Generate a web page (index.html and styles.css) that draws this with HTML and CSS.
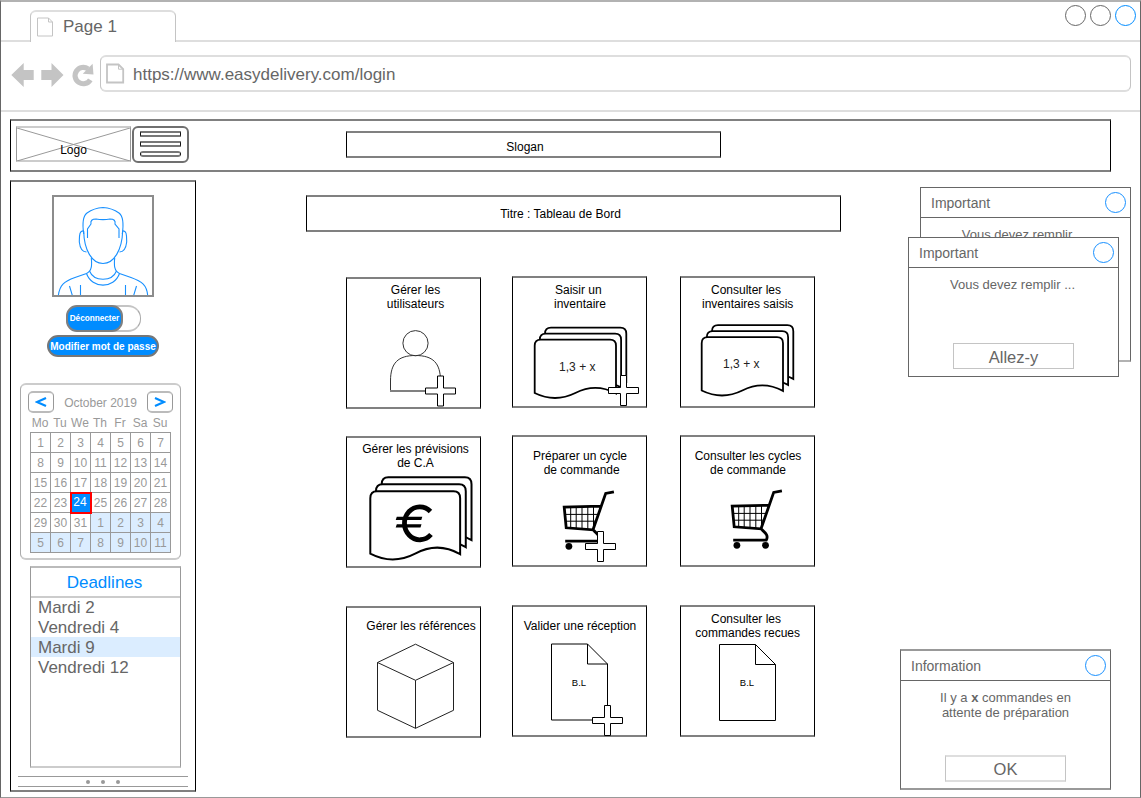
FILE: index.html
```html
<!DOCTYPE html>
<html lang="fr">
<head>
<meta charset="utf-8">
<title>Tableau de Bord</title>
<link rel="stylesheet" href="styles.css">
</head>
<body>
<svg class="defs" width="0" height="0">
  <defs>
    <path id="plus" d="M12.5 0H18.5V12H30.5V18H18.5V30H12.5V18H.5V12H12.5Z" fill="#fff" stroke="#000"/>
    <path id="sheet" d="M0 53.3V6Q0 0 6 0H75.3Q81.3 0 81.3 6V53.7Q61 42.7 40.6 53.3Q20.3 63.3 0 53.3Z" fill="#fff" stroke="#000" stroke-width="1.8"/>
    <g id="sheets">
      <use href="#sheet" x="10.3" y="-12"/>
      <use href="#sheet" x="5.1" y="-6"/>
      <use href="#sheet"/>
    </g>
    <g id="cart" fill="none" stroke="#000">
      <path stroke-width="2.8" d="M50.7 .8L42.5 2.4L29.8 38.8L3 36.8L1 16L38 15.2M29.8 38.8C33 42 38 45 35 50.2H2"/>
      <path stroke-width="1" d="M7.5 16V37M13 16V37M18.8 16V38M24.6 16V38M30.3 16V37M2 23.4H35M2.5 30.2H33"/>
      <g fill="#000" stroke="none"><circle cx="5.7" cy="55.3" r="3.4"/><circle cx="34.3" cy="55.3" r="3.4"/></g>
    </g>
  </defs>
</svg>
<div class="browser">
  <div class="tabs">
    <div class="tab">
      <svg class="tab-icon" width="17" height="20" fill="none" stroke="#c4c4c4"><path d="M.5 1H11.5L15.5 5V19H.5ZM11.5 1V5H15.5"/></svg>
      <span>Page 1</span>
    </div>
    <div class="window-buttons"><i></i><i></i><i class="blue"></i></div>
  </div>
  <div class="toolbar">
    <svg class="nav" width="99" height="68" viewBox="1 42 99 68" fill="#c4c4c4">
      <path d="M11.3 75L23.7 63V70H33.7V80H23.7V87Z"/>
      <path d="M63.5 75L51.5 63V70H41.3V80H51.5V87Z"/>
      <path d="M90.3 79.8A8.2 8.2 0 1 1 88 68.800" fill="none" stroke="#c4c4c4" stroke-width="5.2"/>
      <path d="M92.6 63.700L93.5 74.6L82.8 73.8Z"/>
    </svg>
    <div class="url">
      <svg class="url-icon" width="19" height="21" fill="none" stroke="#c4c4c4"><path stroke-width="1.8" d="M1 1.5H12.5L17.2 6.2V19.5H1Z"/><path d="M12.5 1.5V6.2H17.2"/></svg>
      <span>https://www.easydelivery.com/login</span>
    </div>
  </div>

  <div class="header box">
    <div class="logo">
      <svg width="113" height="33" stroke="#999"><path d="M0 0L113 33M113 0L0 33"/></svg>
      <span>Logo</span>
    </div>
    <div class="burger"><i></i><i></i><i></i></div>
    <div class="slogan box">Slogan</div>
  </div>

  <div class="main">
    <div class="sidebar box">
      <div class="avatar">
        <svg width="98" height="98" viewBox="54 197 98 98" fill="none" stroke="#1890ff" stroke-width="1.1">
          <path d="M83.7 234C82 222 83 216 87 213Q94 208 103 207.500Q112 208 119 213C123 216 124 222 122.300 234"/>
          <path d="M87.500 238V229L91 224Q90 219 96 219Q103 220.300 110 219Q116 219 115 224L119 229V238"/>
          <path d="M83.700 231C84 250 92 263.500 103 263.500C114 263.500 122 250 122.700 231"/>
          <path d="M84 231C79 230 79.500 236 79.300 242C80 248 82 252 86.500 252M122.300 231C127 230 126.500 236 126.700 242C126 248 124 252 119.500 252"/>
          <path d="M91.300 258C92 265 92 271 86.500 273.500L75 277.500C64 281.500 59.500 285 58.300 296M114.700 258C114 265 114 271 119.500 273.500L131 277.500C142 281.500 147 285 147.700 296"/>
          <path d="M89.500 271C94 282 112 282 116.500 271M86.500 273.500C92 289 114 289 119.500 273.500M80.500 285V296M125.500 285V296M69.500 286L72.500 296M136.500 286L133.500 296"/>
        </svg>
      </div>
      <div class="toggle"><span>Déconnecter</span></div>
      <div class="pill">Modifier mot de passe</div>

      <div class="calendar">
        <div class="cal-head">
          <b><svg width="12" height="10"><path d="M11 1L2 5L11 9" fill="none" stroke="#008cff" stroke-width="2.2"/></svg></b>
          <span>October 2019</span>
          <b><svg width="12" height="10"><path d="M1 1L10 5L1 9" fill="none" stroke="#008cff" stroke-width="2.2"/></svg></b>
        </div>
        <div class="days"><i>Mo</i><i>Tu</i><i>We</i><i>Th</i><i>Fr</i><i>Sa</i><i>Su</i></div>
        <div class="dates">
          <i>1</i><i>2</i><i>3</i><i>4</i><i>5</i><i>6</i><i>7</i>
          <i>8</i><i>9</i><i>10</i><i>11</i><i>12</i><i>13</i><i>14</i>
          <i>15</i><i>16</i><i>17</i><i>18</i><i>19</i><i>20</i><i>21</i>
          <i>22</i><i>23</i><i class="today">24</i><i>25</i><i>26</i><i>27</i><i>28</i>
          <i>29</i><i>30</i><i>31</i><i class="next">1</i><i class="next">2</i><i class="next">3</i><i class="next">4</i>
          <i class="next">5</i><i class="next">6</i><i class="next">7</i><i class="next">8</i><i class="next">9</i><i class="next">10</i><i class="next">11</i>
        </div>
      </div>

      <div class="deadlines">
        <div class="dl-title">Deadlines</div>
        <div class="dl">Mardi 2</div>
        <div class="dl">Vendredi 4</div>
        <div class="dl selected">Mardi 9</div>
        <div class="dl">Vendredi 12</div>
      </div>
      <div class="grip"><i></i><i></i><i></i></div>
    </div>

    <div class="center">
      <div class="title box">Titre : Tableau de Bord</div>
      <div class="columns">
        <div class="column first">
          <div class="card box">
            <p class="label r2">Gérer les<br>utilisateurs</p>
            <svg class="art" width="135" height="132">
              <g fill="none" stroke="#333"><circle cx="69.500" cy="66.200" r="12.600"/><path d="M44.500 114V104C44.500 86 52 78.500 69.500 78.500S94.500 86 94.500 104V114"/><path d="M44 114H95" stroke="#808080" stroke-width="2"/></g>
              <use href="#plus" x="79" y="99"/>
            </svg>
          </div>
          <div class="card box">
            <p class="label r2">Gérer les prévisions<br>de C.A</p>
            <svg class="art" width="135" height="132">
              <use href="#sheets" transform="translate(24.300 55.300) scale(1.105 1.170)"/>
              <path d="M84.500 75.500A15.300 16.500 0 1 0 85 98.500" fill="none" stroke="#000" stroke-width="4.800"/>
              <path d="M50.800 80.800H76.300L75.300 84H49.700ZM50.800 88.300H75.500L74.500 91.500H49.700Z"/>
            </svg>
          </div>
          <div class="card box">
            <p class="label mid r7">Gérer les références</p>
            <svg class="art" width="135" height="132" fill="none" stroke="#222"><path d="M69.500 38.200L107.500 56.500V104.300L69.500 122.300L31.500 104.300V56.500ZM31.500 56.500L69.500 74.300L107.500 56.500M69.500 74.300V122.300"/></svg>
          </div>
        </div>
        <div class="column second">
          <div class="card box">
            <p class="label top">Saisir un&nbsp;<br>inventaire</p>
            <svg class="art" width="135" height="132">
              <use href="#sheets" x="22.700" y="63.700"/>
              <text x="65.300" y="95" class="t12">1,3 + x</text>
              <use href="#plus" x="96" y="99.500"/>
            </svg>
          </div>
          <div class="card box">
            <p class="label low">Préparer un cycle<br>&nbsp;de commande</p>
            <svg class="art" width="135" height="132"><use href="#cart" x="51.200" y="56"/><use href="#plus" x="73" y="96.500"/></svg>
          </div>
          <div class="card box">
            <p class="label low">Valider une réception</p>
            <svg class="art" width="135" height="132">
              <path d="M39.500 39H75.500L95.500 59V115H39.500ZM75.500 39V59H95.500" fill="none" stroke="#000"/>
              <text x="67" y="81" class="t10">B.L</text>
              <use href="#plus" x="80" y="100.500"/>
            </svg>
          </div>
        </div>
        <div class="column third">
          <div class="card box">
            <p class="label top l1">Consulter les<br>&nbsp;inventaires saisis</p>
            <svg class="art" width="135" height="132">
              <use href="#sheets" x="21.700" y="61.200"/>
              <text x="61.300" y="92" class="t12">1,3 + x</text>
            </svg>
          </div>
          <div class="card box">
            <p class="label low">Consulter les cycles<br>de commande</p>
            <svg class="art" width="135" height="132"><use href="#cart" x="51.200" y="55"/></svg>
          </div>
          <div class="card box">
            <p class="label top l1">Consulter les<br>&nbsp;commandes recues</p>
            <svg class="art" width="135" height="132">
              <path d="M39.500 39.500H75.500L95.500 59.500V115.500H39.500ZM75.500 39.500V59.500H95.500" fill="none" stroke="#000"/>
              <text x="67" y="81" class="t10">B.L</text>
            </svg>
          </div>
        </div>
      </div>
    </div>

    <div class="notices">
      <div class="notice back">
        <div class="n-head"><span>Important</span><i></i></div>
        <p>Vous devez remplir</p>
      </div>
      <div class="notice front">
        <div class="n-head"><span>Important</span><i></i></div>
        <p>Vous devez remplir ...</p>
        <button>Allez-y</button>
      </div>
      <div class="notice info">
        <div class="n-head"><span>Information</span><i></i></div>
        <p>Il y a <b>x</b> commandes en<br>attente de préparation</p>
        <button>OK</button>
      </div>
    </div>
  </div>
</div>
</body>
</html>
```
FILE: styles.css
```css
* { box-sizing: border-box; }
body { margin: 0; background: #fff; font-family: "Liberation Sans", Arial, sans-serif; font-size: 12px; color: #000; }
i { font-style: normal; }
p { margin: 0; }
svg { display: block; flex: none; }
.defs { position: absolute; }
.box { border: 1px solid #000; border-top: 2px solid #808080; border-bottom: 2px solid #808080; }

.browser { width: 1141px; height: 798px; overflow: hidden; border: 1px solid #666; border-top: 2px solid #b2b2b2; border-bottom-color: #999; }
.tabs { height: 40px; border-bottom: 2px solid #dedede; display: flex; padding: 8px 4px 0 29px; justify-content: space-between; align-items: flex-start; }
.tab { width: 146px; height: 32px; background: #fff; border: 1px solid #c4c4c4; border-top: 2px solid #dedede; border-bottom: 0; border-radius: 6px 6px 0 0; display: flex; padding-left: 6px; font-size: 17px; color: #666; line-height: 30px; }
.tab-icon { margin: 5px 9px 0 0; }
.window-buttons { display: flex; gap: 4px; margin-top: -5px; }
.window-buttons i { width: 21px; height: 21px; border: 1px solid #666; border-radius: 50%; }
.window-buttons .blue { border-color: #008cff; }

.toolbar { height: 70px; border-bottom: 2px solid #dedede; display: flex; }
.url { width: 1031px; height: 37px; margin-top: 13px; border: 1px solid #c4c4c4; border-top: 2px solid #dedede; border-bottom: 2px solid #dedede; border-radius: 6px; display: flex; padding-left: 5px; font-size: 17px; line-height: 36px; color: #666; }
.url-icon { margin: 6px 8px 0 0; }

.header { margin: 7px 0 0 9px; width: 1101px; height: 53px; display: flex; padding: 5px 0 0 5px; }
.logo { width: 115px; height: 36px; display: grid; border: 1px solid #999; border-top: 2px solid #ccc; border-bottom: 2px solid #ccc; }
.logo svg, .logo span { grid-area: 1 / 1; }
.logo span { justify-self: center; margin-top: 15px; line-height: 15px; }
.burger { margin-left: 1px; width: 57px; height: 37px; border: 2px solid #707070; border-radius: 6px; display: flex; flex-direction: column; gap: 4px; padding: 3px 6px; }
.burger i { height: 6px; border: 1px solid #111; border-top: 2px solid #777; border-bottom: 2px solid #777; border-radius: 1px; }
.burger i:last-child { border-radius: 3px; }
.slogan { margin: 5px 0 0 157px; width: 375px; height: 27px; text-align: center; line-height: 29px; padding-right: 17px; }

.main { display: flex; height: 616px; padding: 8px 0 0 9px; }
.sidebar { width: 186px; height: 612px; padding-top: 13px; display: flex; flex-direction: column; }
.avatar { width: 102px; height: 102px; border: 2px solid #8c8c8c; margin-left: 41px; flex: none; }
.toggle { margin: 8px 0 0 55px; width: 75px; height: 27px; border: 2px solid #c4c4c4; border-radius: 13px; border-left: 1px solid #aaa; border-right: 1px solid #aaa; flex: none; }
.toggle span { display: flex; justify-content: center; width: 57px; height: 27px; margin: -2px 0 0 -1px; border: 2px solid #808080; border-radius: 11px; background: #008cff; color: #fff; font-weight: bold; font-size: 8.2px; line-height: 24px; white-space: nowrap; }
.pill { margin: 3px 0 0 36px; width: 112px; height: 22px; border: 2px solid #777; border-radius: 11px; background: #008cff; color: #fff; font-weight: bold; font-size: 10px; line-height: 20px; display: flex; justify-content: center; white-space: nowrap; flex: none; }

.calendar { margin: 26px 0 0 9px; width: 161px; height: 177px; border: 1px solid #aaa; border-top: 2px solid #ccc; border-bottom: 2px solid #ccc; border-radius: 6px; padding: 6px 7px 0; color: #999; flex: none; }
.cal-head { display: flex; justify-content: space-between; height: 23px; line-height: 25px; white-space: nowrap; }
.cal-head b { width: 26px; height: 22px; border: 1px solid #999; border-top: 2px solid #bbb; border-bottom: 2px solid #bbb; border-radius: 5px; display: flex; align-items: center; justify-content: center; }
.days { display: grid; grid-template-columns: repeat(7, 20px); margin-left: 2px; line-height: 18px; height: 18px; text-align: center; }
.dates { display: grid; grid-template-columns: repeat(7, 20px); width: 141px; margin-left: 2px; border-left: 1px solid #999; border-top: 1px solid #999; text-align: center; line-height: 21px; }
.dates i { width: 20px; height: 20px; border-right: 1px solid #999; border-bottom: 1px solid #999; white-space: nowrap; }
.dates .next { background: #dbedff; }
.dates .today { background: #008cff; color: #fff; outline: 2px solid #f00; outline-offset: -1px; border: 0; position: relative; line-height: 19px; padding-right: 2px; }

.deadlines { margin: 6px 0 0 19px; width: 151px; height: 202px; border: 1px solid #999; border-top: 2px solid #bbb; border-bottom: 2px solid #ccc; font-size: 17px; color: #666; flex: none; }
.dl-title { height: 30px; margin-bottom: -1px; border-bottom: 2px solid #ccc; line-height: 29px; text-align: center; padding-right: 2px; color: #008cff; }
.dl { height: 20px; line-height: 21px; padding-left: 7px; }
.dl.selected { background: #dbedff; }
.grip { margin: 8px 0 0 7px; width: 170px; height: 11px; border-top: 1px solid #999; border-bottom: 1px solid #999; display: flex; justify-content: center; align-items: center; gap: 11px; flex: none; }
.grip i { width: 4px; height: 4px; border-radius: 50%; background: #999; }

.center { width: 535px; margin-left: 110px; padding-top: 15px; }
.title { height: 37px; text-align: center; line-height: 35px; padding-right: 26px; }
.columns { display: flex; padding: 44px 0 0 40px; }
.column { width: 135px; flex: none; }
.first { margin-top: 1px; }
.second { margin-left: 31px; }
.third { margin-left: 33px; }
.card { height: 132px; display: grid; margin-bottom: 27px; }
.card:nth-child(2) { margin-bottom: 38px; }
.label, .art { grid-area: 1 / 1; }
.label { text-align: center; line-height: 14px; padding-top: 4px; white-space: nowrap; }
.label.top { padding-top: 5px; }
.label.mid { padding-top: 11px; }
.label.low { padding-top: 12px; }
.label.r2 { padding-left: 3px; }
.label.r7 { padding-left: 14px; }
.label.l1 { padding-right: 4px; }
.art { margin: -2px 0 0 -1px; }
.t12 { font-size: 12px; text-anchor: middle; fill: #222; }
.t10 { font-size: 9.5px; text-anchor: middle; }

.notices { width: 231px; margin-left: 59px; position: relative; padding-top: 469px; }
.notice { width: 211px; border: 1px solid #666; background: #fff; color: #666; font-size: 13px; line-height: 15px; text-align: center; }
.n-head { height: 30px; border-bottom: 1px solid #666; display: flex; justify-content: space-between; align-items: center; padding: 0 4px 0 10px; font-size: 14px; }
.n-head span { padding-top: 2px; }
.n-head i { width: 21px; height: 21px; border: 1px solid #1890ff; border-radius: 50%; }
.notice p { padding-top: 9px; white-space: nowrap; }
.back { position: absolute; left: 20px; top: 7px; height: 175px; border-bottom: 2px solid #b2b2b2; }
.back p { padding-right: 17px; }
.front { position: absolute; left: 8px; top: 57px; height: 140px; }
.front p { padding-right: 2px; }
.info { height: 141px; border-top: 2px solid #999; border-bottom: 2px solid #999; }
.notice button { display: block; width: 121px; height: 26px; margin: 51px auto 0 44px; padding: 2px 0 0; border: 1px solid #c4c4c4; background: #fff; font: 16.5px "Liberation Sans", Arial, sans-serif; color: #666; }
.info button { height: 27px; margin-top: 35px; border-top: 2px solid #dedede; border-bottom: 2px solid #dedede; }
```
